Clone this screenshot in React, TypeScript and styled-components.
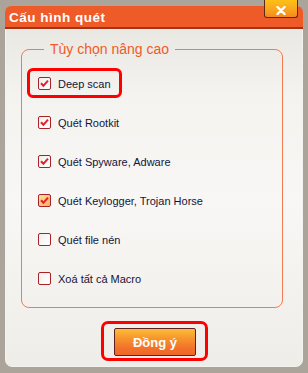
import styled, { createGlobalStyle } from "styled-components"

const GlobalStyle = createGlobalStyle`
  html, body {
    margin: 0;
    padding: 0;
    background: #aaa49b;
  }
  body {
    width: 308px;
    height: 373px;
    overflow: hidden;
    font-family: "Liberation Sans", Arial, sans-serif;
  }
`

type Option = {
  label: string,
  checked: boolean,
  hover?: boolean,
  highlight?: boolean,
}

const options: Option[] = [
  { label: "Deep scan", checked: true, highlight: true },
  { label: "Quét Rootkit", checked: true },
  { label: "Quét Spyware, Adware", checked: true },
  { label: "Quét Keylogger, Trojan Horse", checked: true, hover: true },
  { label: "Quét file nén", checked: false },
  { label: "Xoá tất cả Macro", checked: false },
]

export default function App() {
  return (
    <>
      <GlobalStyle />
      <Window>
        <TitleBar>
          <Title>Cấu hình quét</Title>
          <CloseButton type="button" aria-label="Đóng">
            <svg width="10" height="9" viewBox="0 0 10 9">
              <path d="M1.5 1 L8.5 8 M8.5 1 L1.5 8" stroke="#fff" strokeWidth="2.4" strokeLinecap="round" />
            </svg>
          </CloseButton>
        </TitleBar>
        <Body>
          <Group>
            <Legend>Tùy chọn nâng cao</Legend>
            <OptionList>
              {options.map((option) => (
                <Row key={option.label} $highlight={option.highlight}>
                  <Box $checked={option.checked} $hover={option.hover}>
                    {option.checked && (
                      <svg width="11" height="11" viewBox="0 0 11 11">
                        <path d="M2 5.2 L4.4 7.8 L9 2.6" fill="none" stroke="#e3202a" strokeWidth="2" />
                      </svg>
                    )}
                  </Box>
                  <Label>{option.label}</Label>
                </Row>
              ))}
            </OptionList>
          </Group>
          <Footer>
            <Highlight>
              <OkButton type="button">Đồng ý</OkButton>
            </Highlight>
          </Footer>
        </Body>
      </Window>
    </>
  )
}

const Window = styled.div`
  box-sizing: border-box;
  margin: 6px 0 0 5px;
  width: 298px;
  height: 361px;
  display: flex;
  flex-direction: column;
  border: 1px solid #f4f2ee;
  border-radius: 7px;
  background: linear-gradient(180deg, #e6e4de 0%, #f4f3f0 25%, #f8f7f5 55%, #eeede8 100%);
`

const TitleBar = styled.div`
  box-sizing: border-box;
  height: 23px;
  display: flex;
  align-items: flex-start;
  justify-content: space-between;
  padding: 0 5px 0 4px;
  background: #ef5a29;
  border-bottom: 2px solid #a63217;
  border-radius: 6px 6px 0 0;
  margin: -1px -1px 0 -1px;
`

const Title = styled.span`
  margin-top: 4px;
  font-size: 13.5px;
  font-weight: bold;
  color: #ffffff;
  letter-spacing: 0.5px;
`

const CloseButton = styled.button`
  box-sizing: border-box;
  margin-top: -6px;
  width: 34px;
  height: 18px;
  padding: 4px 0 0;
  display: flex;
  align-items: center;
  justify-content: center;
  border: 1px solid #5a2a18;
  border-top: none;
  border-radius: 0 0 3px 3px;
  background: linear-gradient(180deg, #fdc116 0%, #f9a51d 55%, #f38a1f 100%);
  cursor: pointer;
`

const Body = styled.div`
  flex: 1;
  display: flex;
  flex-direction: column;
  padding: 12px 19px 0 15px;
`

const Group = styled.fieldset`
  margin: 0;
  padding: 0 0 22px;
  border: 1px solid #f27b52;
  border-radius: 8px;
`

const Legend = styled.legend`
  margin-left: 22px;
  padding: 0 6px;
  font-size: 14px;
  color: #f05a26;
`

const OptionList = styled.div`
  display: flex;
  flex-direction: column;
  align-items: flex-start;
  gap: 26px;
  padding: 20px 0 0 16px;
`

const Row = styled.div<{ $highlight?: boolean }>`
  position: relative;
  display: flex;
  align-items: center;
  gap: 7px;
  height: 13px;

  &::after {
    content: "";
    display: ${({ $highlight }) => ($highlight ? "block" : "none")};
    position: absolute;
    top: -9px;
    bottom: -8px;
    left: -11px;
    right: -11px;
    border: 3px solid #ff0000;
    border-radius: 6px;
  }
`

const Box = styled.span<{ $checked?: boolean, $hover?: boolean }>`
  box-sizing: border-box;
  width: 13px;
  height: 13px;
  display: flex;
  align-items: center;
  justify-content: center;
  border: 1px solid #a82228;
  border-radius: 2px;
  background: ${({ $hover }) =>
    $hover
      ? "linear-gradient(135deg, #fde3a0 0%, #f8b058 100%)"
      : "linear-gradient(135deg, #f3eeee 0%, #ffffff 100%)"};
`

const Label = styled.span`
  font-size: 11px;
  color: #14143a;
`

const Footer = styled.div`
  display: flex;
  justify-content: center;
  padding: 13px 0 0 5px;
`

const Highlight = styled.div`
  padding: 4px 9px 2px 10px;
  border: 3px solid #ff0000;
  border-radius: 7px;
`

const OkButton = styled.button`
  box-sizing: border-box;
  width: 82px;
  height: 28px;
  display: flex;
  align-items: center;
  justify-content: center;
  border: 1px solid #5e1f1f;
  border-radius: 2px;
  background: linear-gradient(180deg, #fcbd3a 0%, #f7962c 35%, #f2702a 75%, #ef6628 100%);
  font-family: "Liberation Sans", Arial, sans-serif;
  font-size: 13px;
  font-weight: bold;
  color: #ffffff;
  cursor: pointer;
`
